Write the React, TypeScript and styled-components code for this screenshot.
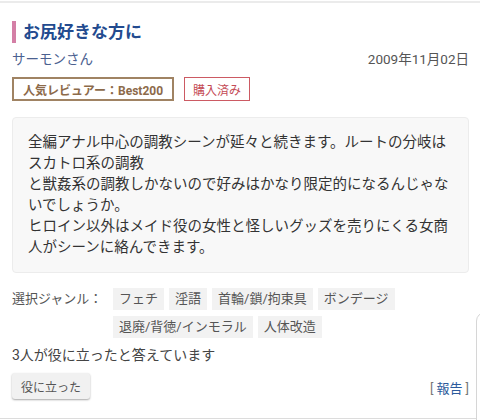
import React from 'react';
import styled, { createGlobalStyle } from 'styled-components';

const GlobalStyle = createGlobalStyle`
  html, body {
    margin: 0;
    padding: 0;
    background: #fff;
  }
  body {
    font-family: Roboto, "Noto Sans CJK JP", "Noto Sans", sans-serif;
    color: #333;
  }
`;

const Page = styled.div`
  position: relative;
  width: 480px;
  height: 420px;
  overflow: hidden;
  padding-top: 1px;
  box-sizing: border-box;
`;

const ReviewItem = styled.article`
  border-top: 2px solid #ebebeb;
  border-bottom: 1px solid #dcdcdc;
  padding: 18px 11px 19px 12px;
  display: flex;
  flex-direction: column;
`;

const Title = styled.h2`
  margin: 0;
  border-left: 4px solid #d47fa6;
  padding-left: 7px;
  font-size: 17px;
  line-height: 22px;
  font-weight: 700;
  color: #234b8f;
`;

const MetaRow = styled.div`
  margin-top: 7px;
  display: flex;
  justify-content: space-between;
  align-items: center;
  line-height: 18px;
`;

const Author = styled.span`
  font-size: 13.5px;
  color: #4b6190;
`;

const DateText = styled.span`
  font-size: 13.5px;
  color: #555;
`;

const BadgeRow = styled.div`
  margin-top: 9px;
  display: flex;
  gap: 10px;
`;

const Badge = styled.span<{ $tone: 'brown' | 'red' }>`
  display: inline-flex;
  align-items: center;
  height: 24px;
  box-sizing: border-box;
  padding: 0 ${p => (p.$tone === 'brown' ? 9 : 8)}px;
  font-size: 12px;
  font-weight: ${p => (p.$tone === 'brown' ? 700 : 400)};
  color: ${p => (p.$tone === 'brown' ? '#8c6a4a' : '#c44a55')};
  border: ${p => (p.$tone === 'brown' ? '2px solid #a08363' : '1px solid #cc5a63')};
`;

const Body = styled.div`
  margin-top: 16px;
  background: #f8f8f8;
  border: 1px solid #ececec;
  border-radius: 4px;
  padding: 14px 15px;
  font-size: 14.5px;
  line-height: 21px;
  color: #333;
  white-space: pre-line;
`;

const GenreRow = styled.div`
  margin-top: 15px;
  display: flex;
  align-items: flex-start;
`;

const GenreLabel = styled.span`
  width: 101px;
  flex-shrink: 0;
  font-size: 13px;
  line-height: 22px;
  color: #555;
`;

const TagList = styled.div`
  display: flex;
  flex-wrap: wrap;
  gap: 6px 5px;
  width: 300px;
`;

const Tag = styled.span`
  height: 22px;
  line-height: 22px;
  padding: 0 6px;
  background: #f2f2f2;
  font-size: 13px;
  color: #555;
`;

const HelpfulText = styled.p`
  margin: 8px 0 0;
  font-size: 14px;
  line-height: 18px;
  color: #444;
`;

const ActionRow = styled.div`
  margin-top: 9px;
  display: flex;
  justify-content: space-between;
  align-items: center;
`;

const HelpfulButton = styled.button`
  height: 26px;
  padding: 0 9px;
  border: none;
  border-radius: 3px;
  background: #f1f1f1;
  box-shadow: 0 1px 2px rgba(0, 0, 0, 0.35);
  font-family: inherit;
  font-size: 12px;
  color: #555;
`;

const Report = styled.span`
  margin-top: 2px;
  font-size: 13px;
  color: #777;

  a {
    color: #2c5b9c;
    text-decoration: none;
    margin: 0 3px;
  }
`;

const EdgePanel = styled.div`
  position: absolute;
  left: 476px;
  top: 312px;
  width: 30px;
  height: 140px;
  border: 1px solid #d6d6d6;
  border-radius: 9px;
  background: #fff;
`;

const reviewText = `全編アナル中心の調教シーンが延々と続きます。ルートの分岐はスカトロ系の調教
と獣姦系の調教しかないので好みはかなり限定的になるんじゃないでしょうか。
ヒロイン以外はメイド役の女性と怪しいグッズを売りにくる女商人がシーンに絡んできます。`;

const genres = ['フェチ', '淫語', '首輪/鎖/拘束具', 'ボンデージ', '退廃/背徳/インモラル', '人体改造'];

export default function App() {
  return (
    <Page>
      <GlobalStyle />
      <ReviewItem>
        <Title>お尻好きな方に</Title>
        <MetaRow>
          <Author>サーモンさん</Author>
          <DateText>2009年11月02日</DateText>
        </MetaRow>
        <BadgeRow>
          <Badge $tone="brown">人気レビュアー：Best200</Badge>
          <Badge $tone="red">購入済み</Badge>
        </BadgeRow>
        <Body>{reviewText}</Body>
        <GenreRow>
          <GenreLabel>選択ジャンル：</GenreLabel>
          <TagList>
            {genres.map(g => (
              <Tag key={g}>{g}</Tag>
            ))}
          </TagList>
        </GenreRow>
        <HelpfulText>3人が役に立ったと答えています</HelpfulText>
        <ActionRow>
          <HelpfulButton>役に立った</HelpfulButton>
          <Report>
            [<a href="#">報告</a>]
          </Report>
        </ActionRow>
      </ReviewItem>
      <EdgePanel />
    </Page>
  );
}
